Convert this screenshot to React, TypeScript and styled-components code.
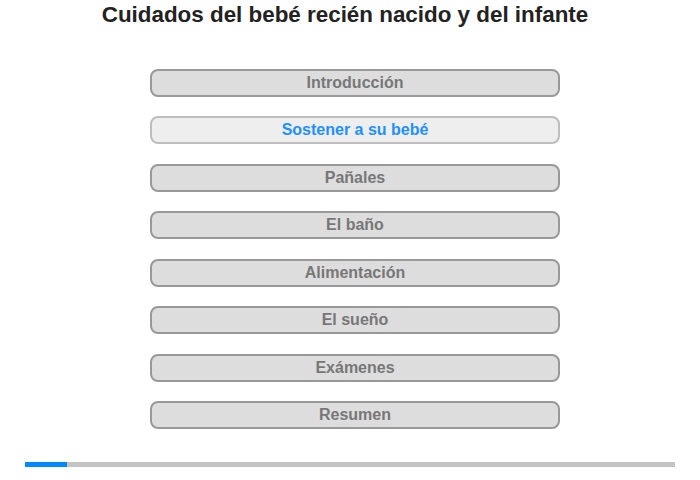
import styled, { createGlobalStyle } from "styled-components";

const GlobalStyle = createGlobalStyle`
    body {
        margin: 0;
        background: #fff;
        font-family: "Liberation Sans", Arial, sans-serif;
    }
`;

const StyledPage = styled.main`
    width: 700px;
    height: 480px;
    display: flex;
    flex-direction: column;
`;

const StyledTitle = styled.h1`
    margin: 0;
    padding: 1.5px 10px 0 0;
    font-size: 22.4px;
    line-height: 25px;
    font-weight: bold;
    color: #222;
    text-align: center;
`;

const StyledMenu = styled.nav`
    display: flex;
    flex-direction: column;
    gap: 19.5px;
    width: 410px;
    margin: 42px 0 0 150px;
`;

const StyledItem = styled.button<{ $active?: boolean }>`
    box-sizing: border-box;
    height: 28px;
    width: 100%;
    border: 2px solid ${(p) => (p.$active ? "#bdbdbd" : "#999")};
    border-radius: 8px;
    background: ${(p) => (p.$active ? "#eee" : "#ddd")};
    color: ${(p) => (p.$active ? "#1e90ff" : "#777")};
    font-family: "Liberation Sans", Arial, sans-serif;
    font-size: 16px;
    font-weight: bold;
    padding: 0;
    cursor: pointer;
`;

const StyledProgress = styled.div`
    height: 5px;
    margin: 33px 25px 0;
    background: #c4c4c4;
`;

const StyledProgressFill = styled.div`
    height: 100%;
    background: #0088ff;
`;

const sections = [
    "Introducción",
    "Sostener a su bebé",
    "Pañales",
    "El baño",
    "Alimentación",
    "El sueño",
    "Exámenes",
    "Resumen",
];

export default function App() {
    const current = 1;
    const progress = 42 / 650;

    return (
        <>
            <GlobalStyle />
            <StyledPage>
                <StyledTitle>Cuidados del bebé recién nacido y del infante</StyledTitle>
                <StyledMenu>
                    {sections.map((s, i) => (
                        <StyledItem key={s} $active={i === current}>
                            {s}
                        </StyledItem>
                    ))}
                </StyledMenu>
                <StyledProgress>
                    <StyledProgressFill style={{ width: `${progress * 100}%` }} />
                </StyledProgress>
            </StyledPage>
        </>
    );
}
